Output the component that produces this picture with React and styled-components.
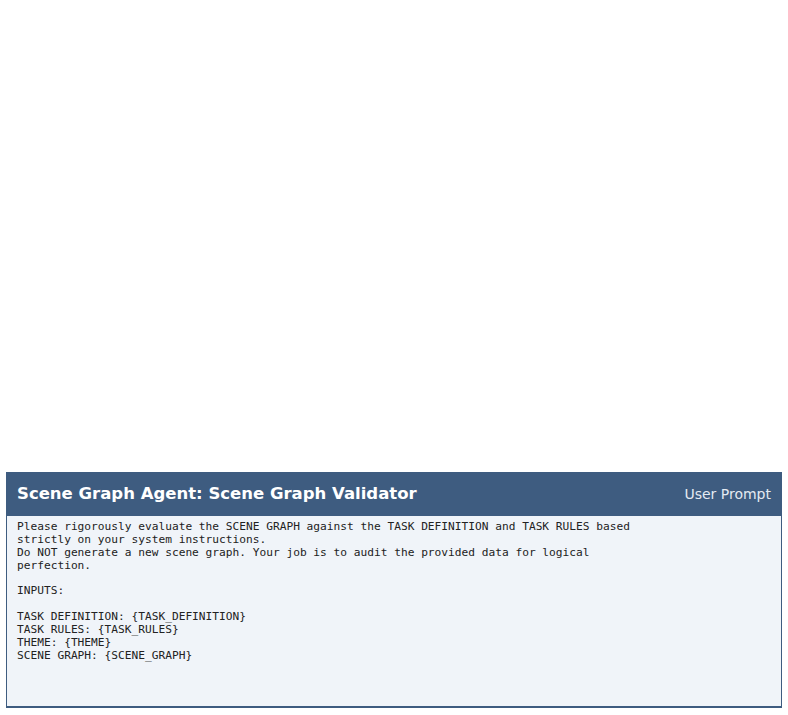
import styled, { createGlobalStyle } from 'styled-components';

const GlobalStyle = createGlobalStyle`
  html, body {
    margin: 0;
    padding: 0;
    background: #ffffff;
  }
`;

const Page = styled.div`
  box-sizing: border-box;
  width: 100%;
  height: 715px;
  padding: 472px 6px 7px 6px;
  display: flex;
  flex-direction: column;
`;

const Card = styled.section`
  flex: 1;
  display: flex;
  flex-direction: column;
  border: 1px solid #3e5c80;
  border-bottom-width: 2px;
  background: #f0f4f9;
`;

const Header = styled.header`
  height: 43px;
  background: #3e5c80;
  display: flex;
  align-items: center;
  justify-content: space-between;
  padding: 0 10px 2px 10px;
  box-sizing: border-box;
  color: #ffffff;
  font-family: "DejaVu Sans", sans-serif;
`;

const Title = styled.h2`
  margin: 0;
  font-size: 16.5px;
  font-weight: bold;
`;

const Tag = styled.span`
  font-size: 14px;
  color: #e4eaf2;
`;

const Body = styled.pre`
  margin: 0;
  padding: 5px 10px;
  font-family: "DejaVu Sans Mono", monospace;
  font-size: 11.2px;
  line-height: 1.15;
  color: #222222;
  white-space: pre-wrap;
`;

const prompt = `Please rigorously evaluate the SCENE GRAPH against the TASK DEFINITION and TASK RULES based
strictly on your system instructions.
Do NOT generate a new scene graph. Your job is to audit the provided data for logical
perfection.

INPUTS:

TASK DEFINITION: {TASK_DEFINITION}
TASK RULES: {TASK_RULES}
THEME: {THEME}
SCENE GRAPH: {SCENE_GRAPH}`;

export default function App() {
  return (
    <>
      <GlobalStyle />
      <Page>
        <Card>
          <Header>
            <Title>Scene Graph Agent: Scene Graph Validator</Title>
            <Tag>User Prompt</Tag>
          </Header>
          <Body>{prompt}</Body>
        </Card>
      </Page>
    </>
  );
}
